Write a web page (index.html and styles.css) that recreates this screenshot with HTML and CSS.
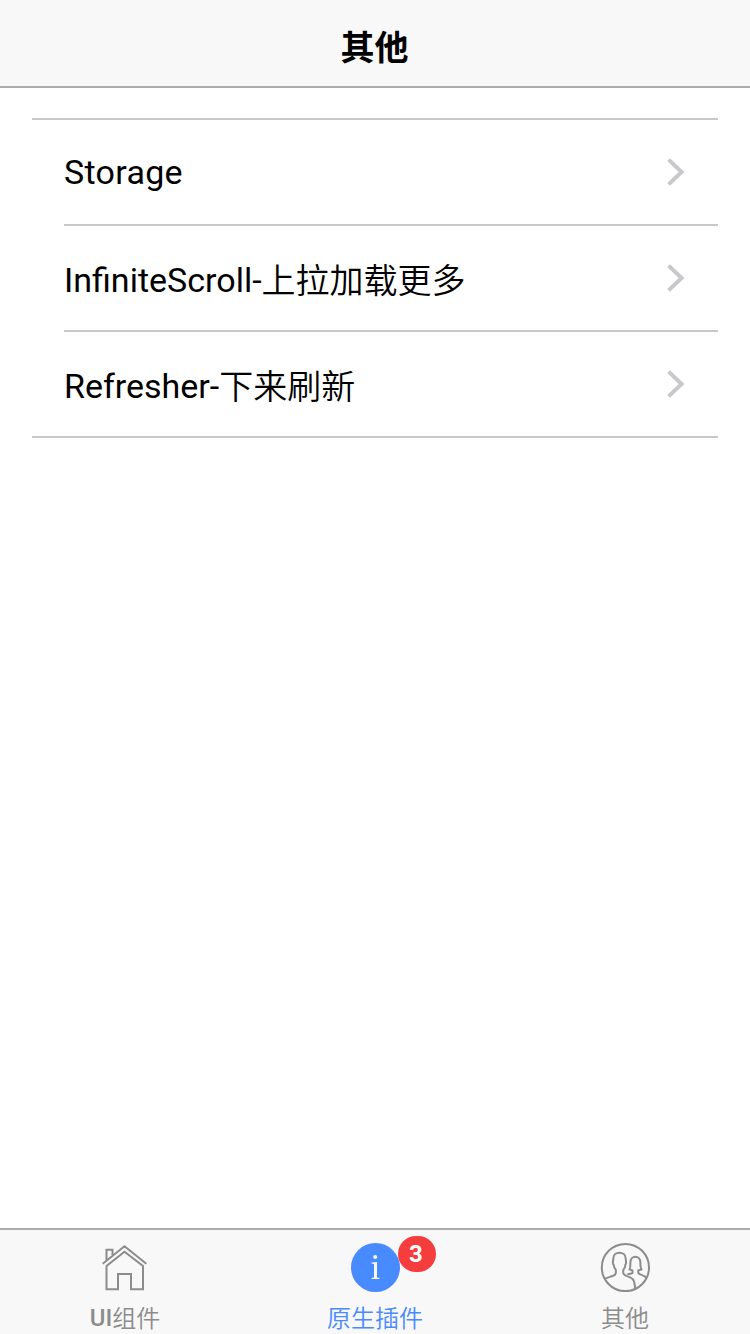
FILE: index.html
```html
<!DOCTYPE html>
<html lang="zh-CN">
<head>
<meta charset="utf-8">
<title>其他</title>
<link rel="stylesheet" href="styles.css">
</head>
<body>
<header class="toolbar"><h1 class="title">其他</h1></header>
<main class="content">
  <ul class="list">
    <li class="item"><div class="item-inner"><span class="label latin">Storage</span><svg class="chevron" viewBox="0 0 18 28"><path d="M1.6 1.6 14.6 14 1.6 26.4"/></svg></div></li>
    <li class="item"><div class="item-inner"><span class="label">InfiniteScroll-<span class="cjk">上拉加载更多</span></span><svg class="chevron" viewBox="0 0 18 28"><path d="M1.6 1.6 14.6 14 1.6 26.4"/></svg></div></li>
    <li class="item"><div class="item-inner"><span class="label">Refresher-<span class="cjk">下来刷新</span></span><svg class="chevron" viewBox="0 0 18 28"><path d="M1.6 1.6 14.6 14 1.6 26.4"/></svg></div></li>
  </ul>
</main>
<nav class="tabs">
  <a class="tab">
    <svg class="tab-icon" viewBox="0 0 50 50"><path d="M2.7 21.7 24.5 4.3 46.3 21.7M6.5 18.5V7.7H12.5V13M6.5 47.3V24L24.5 9.7 43 24V47.3H31V32H18V47.3Z"/></svg>
    <span class="tab-label">UI<span class="cjk">组件</span></span>
  </a>
  <a class="tab active">
    <span class="icon-wrap">
      <svg class="tab-icon" viewBox="0 0 50 50"><circle class="disc" cx="25.5" cy="25.5" r="24.5"/><path class="mark" d="M21.5 20.5 27 20V35.5L29.5 36V37H21.5V36L24 35.5V22L21.5 21.5Z"/><circle class="mark" cx="25.2" cy="15" r="2"/></svg>
      <span class="badge">3</span>
    </span>
    <span class="tab-label"><span class="cjk">原生插件</span></span>
  </a>
  <a class="tab">
    <svg class="tab-icon" viewBox="0 0 50 50"><circle cx="25.4" cy="25.5" r="23.6"/><path d="M4.8 37C7 34.8 13.5 34.8 15.3 32.3Q16.3 30.5 15.7 27.5Q13.9 26 13.7 23Q12.5 22 13 19.5L13.4 16C13.4 9 25.6 9 25.6 16L26 19.5Q26.3 22 25.3 23Q25.2 26 23.5 27.5Q22.8 30.5 23.7 32C25.5 34.8 33 34.5 34 39.5Q35 43 35.2 46.8M27.5 32Q31 32.2 32.5 31V28.5L29.6 27.5Q30.5 25 30.4 20.5C30.4 12.8 40.4 12.8 40.4 20.5Q40.2 25 41.4 27.5L38.3 28.5V31C39.5 33.2 44.5 32.7 46.2 36"/></svg>
    <span class="tab-label"><span class="cjk">其他</span></span>
  </a>
</nav>
</body>
</html>
```
FILE: styles.css
```css
* { box-sizing: border-box; }
body {
  margin: 0;
  height: 1334px;
  display: flex;
  flex-direction: column;
  overflow: hidden;
  background: #fff;
  color: #000;
  font-family: Roboto, "Noto Sans CJK SC", sans-serif;
}
.toolbar {
  height: 88px;
  display: flex;
  align-items: center;
  justify-content: center;
  background: #f8f8f8;
  border-bottom: 2px solid #acacac;
}
.title { margin: 9px 1px 0 0; font-size: 34px; line-height: 50px; font-weight: 700; }
.content { flex: 1; padding: 30px 32px; }
.list {
  margin: 0;
  padding: 0;
  list-style: none;
  border: solid #c8c7cc;
  border-width: 2px 0;
}
.item { padding-left: 32px; }
.item-inner {
  height: 106px;
  display: flex;
  align-items: center;
  justify-content: space-between;
  padding-right: 33px;
  border-bottom: 2px solid #c8c7cc;
}
.item:last-child .item-inner { height: 104px; border-bottom: 0; }
.label { padding-top: 4px; font-size: 34px; line-height: 50px; font-weight: 400; }
.label.latin { padding-top: 0; letter-spacing: 0.3px; }
.cjk {
  font-family: "Noto Sans CJK SC DemiLight", "Noto Sans CJK SC", sans-serif;
  font-weight: 350;
  line-height: 1;
}
.label .cjk { vertical-align: -1px; }
.chevron { width: 18px; height: 28px; fill: none; stroke: #c8c7cc; stroke-width: 4; }
.tabs {
  height: 106px;
  display: flex;
  background: #f8f8f8;
  border-top: 2px solid #acacac;
}
.tab {
  flex: 1;
  display: flex;
  flex-direction: column;
  align-items: center;
  padding-top: 12px;
  color: #8c8c8c;
}
.tab.active { color: #488aff; }
.icon-wrap { position: relative; height: 50px; flex: none; }
.tab-icon { display: block; flex: none; width: 50px; height: 50px; fill: none; stroke: currentColor; stroke-width: 2; }
.disc { fill: currentColor; stroke: none; }
.mark { fill: #f8f8f8; stroke: none; }
.badge {
  position: absolute;
  left: 48px;
  top: -6px;
  width: 38px;
  height: 36px;
  border-radius: 18px;
  background: #f53d3d;
  color: #fff;
  font-size: 24px;
  line-height: 36px;
  font-weight: 700;
  text-align: center;
  text-indent: -2px;
}
.tab-label { margin-top: 10px; font-size: 24px; line-height: 32px; font-weight: 500; }
.tab-label .cjk { vertical-align: -1px; }
```
